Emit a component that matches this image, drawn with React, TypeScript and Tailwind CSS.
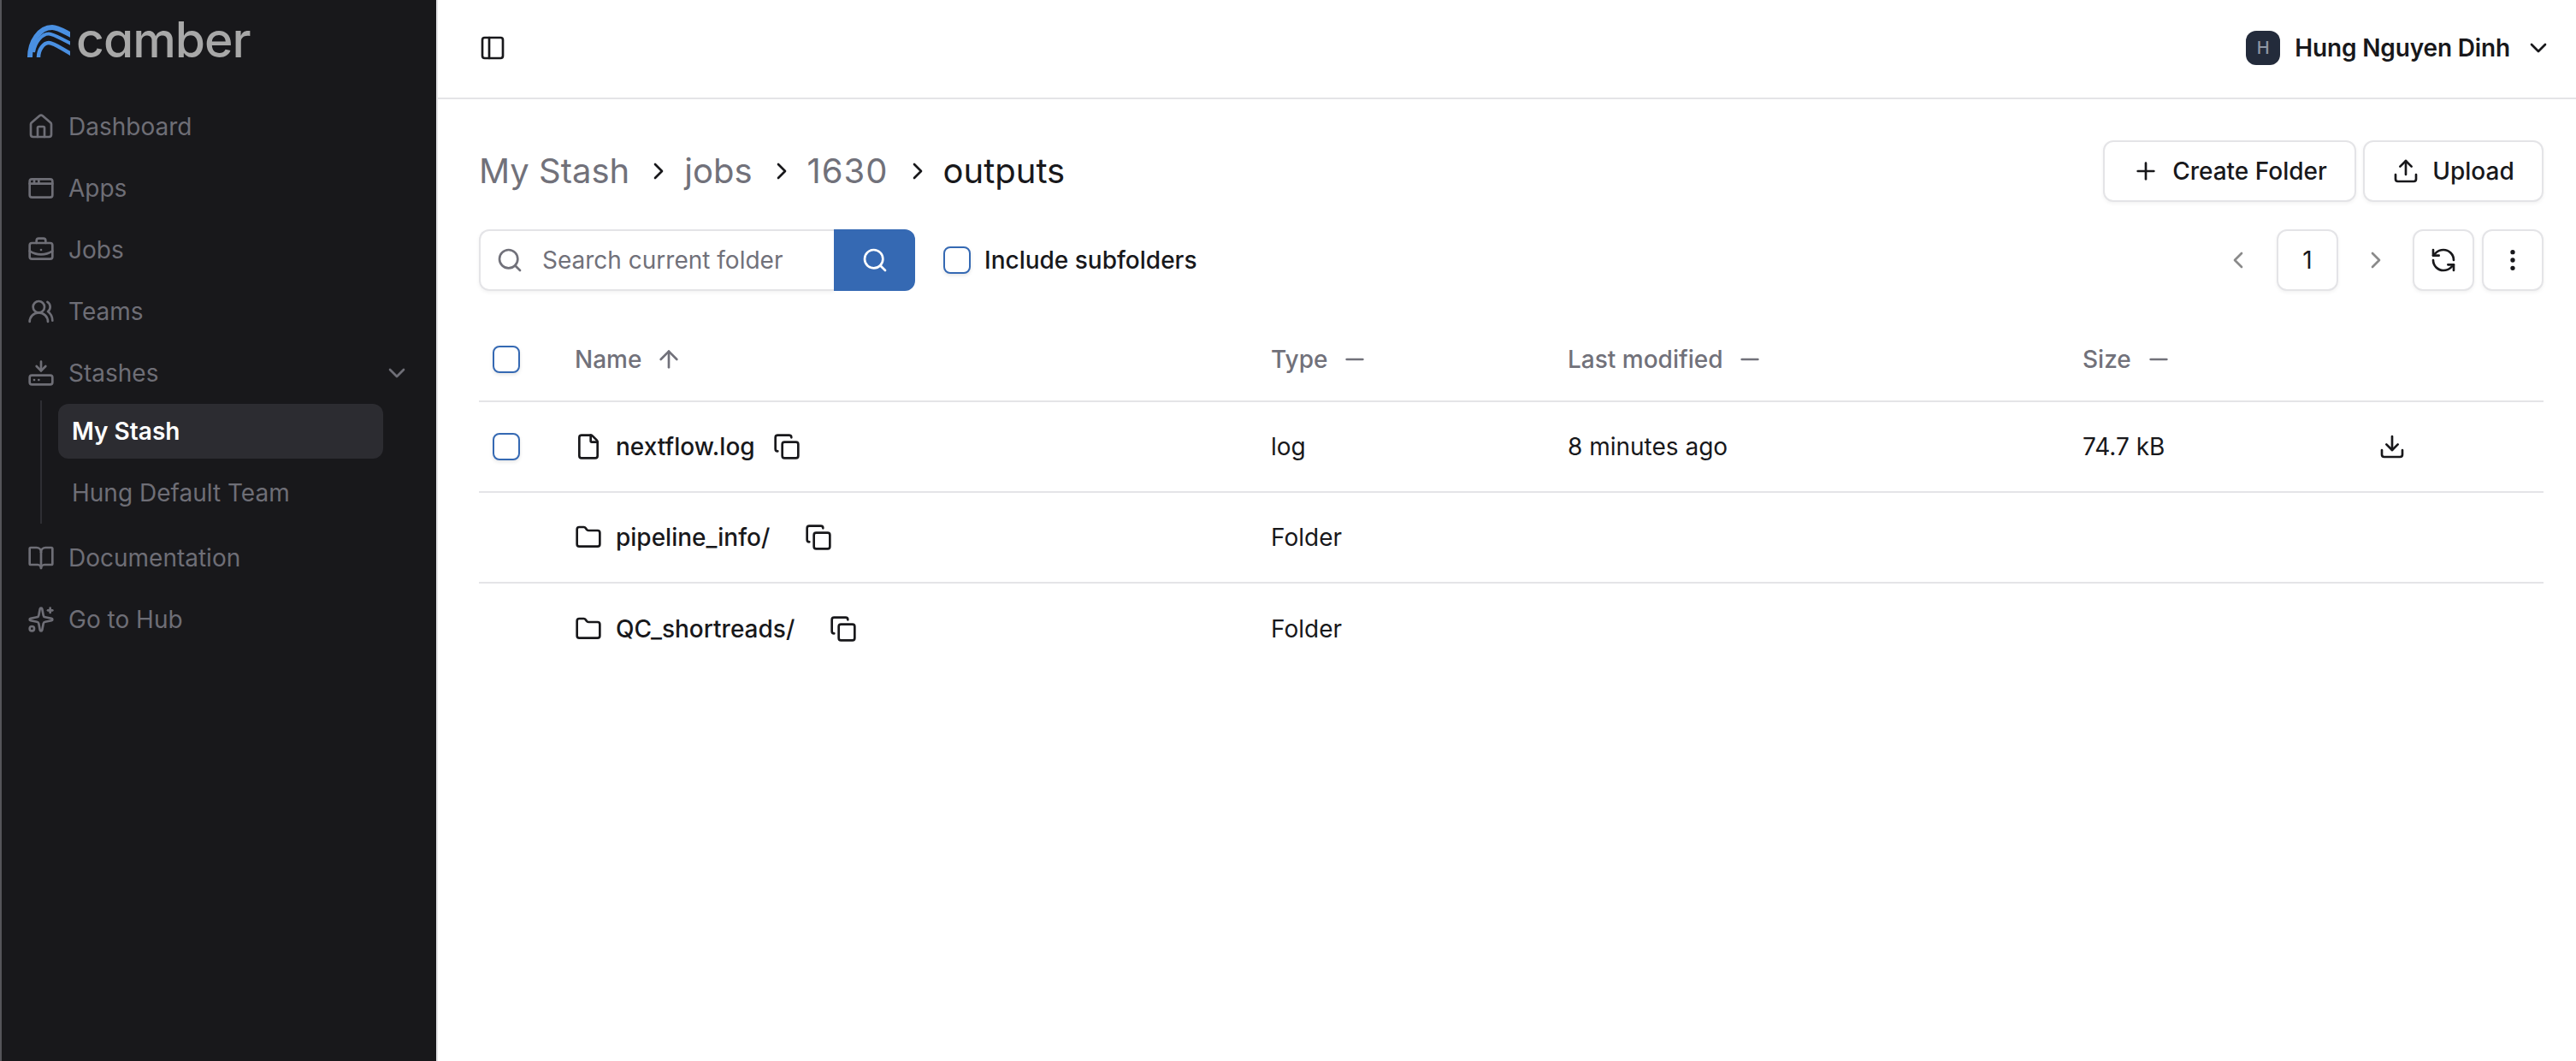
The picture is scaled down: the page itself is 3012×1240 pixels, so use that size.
import React from 'react';
import {
  AppWindow,
  ArrowUp,
  BookOpen,
  BriefcaseBusiness,
  ChevronDown,
  ChevronLeft,
  ChevronRight,
  Copy,
  Download,
  EllipsisVertical,
  File,
  Folder,
  HardDriveDownload,
  House,
  Minus,
  PanelLeft,
  Plus,
  RefreshCcw,
  Search,
  Sparkles,
  Upload,
  UsersRound,
} from 'lucide-react';

const topNav = [
  { label: 'Dashboard', icon: House },
  { label: 'Apps', icon: AppWindow },
  { label: 'Jobs', icon: BriefcaseBusiness },
  { label: 'Teams', icon: UsersRound },
];

const bottomNav = [
  { label: 'Documentation', icon: BookOpen },
  { label: 'Go to Hub', icon: Sparkles },
];

const rows = [
  { name: 'nextflow.log', isFile: true, copyGap: 'ml-[21px]', type: 'log', modified: '8 minutes ago', size: '74.7 kB' },
  { name: 'pipeline_info/', isFile: false, copyGap: 'ml-[41px]', type: 'Folder', modified: '', size: '' },
  { name: 'QC_shortreads/', isFile: false, copyGap: 'ml-[41px]', type: 'Folder', modified: '', size: '' },
];

const gridCols = 'grid grid-cols-[112px_814px_347px_602px_1fr] items-center';

const Logo = () => (
  <div className="flex h-[116px] items-start pl-[30px] pt-[29px]">
    <svg width="50" height="38" viewBox="0 0 50 38" fill="none" stroke="#4a90e2" className="shrink-0">
      <path d="M3 38C3 20 14 3 29 3C36 3 43 8 53 13" strokeWidth="6" />
      <path d="M7 32C9 20 17 10.5 25 10.5C31 10.5 40 17 53 23" strokeWidth="4" />
      <path d="M13 38C13 29 19 21 25 21C31 21 40 28 53 35" strokeWidth="4.5" />
    </svg>
    <span className="ml-[7px] -mt-[14px] text-[57px] leading-[64px] font-medium tracking-[-1px] text-[#a8a8a8] [font-feature-settings:'cv11']">
      camber
    </span>
  </div>
);

const NavItem = ({ label, icon: Icon }: { label: string; icon: React.ElementType }) => (
  <div className="flex h-16 items-center pl-[30px] text-[#6e6e76]">
    <Icon size={32} className="shrink-0" />
    <span className="ml-4 text-[28px]">{label}</span>
  </div>
);

const Sidebar = () => (
  <aside className="w-[512px] shrink-0 border-l-2 border-r-2 border-l-[#55555a] border-r-[#e4e4e7] bg-[#18181b]">
    <Logo />
    <nav className="flex flex-col gap-2">
      {topNav.map((item) => (
        <NavItem key={item.label} {...item} />
      ))}
      <div>
        <div className="flex h-16 items-center pl-[30px] pr-[30px] text-[#6e6e76]">
          <HardDriveDownload size={32} className="shrink-0" />
          <span className="ml-4 flex-1 text-[28px]">Stashes</span>
          <ChevronDown size={32} />
        </div>
        <div className="ml-[45px] flex w-[401px] flex-col gap-2 border-l-2 border-[#2e2e33] py-1 pl-[19px]">
          <div className="flex h-16 items-center rounded-[12px] bg-[#2c2c31] px-4 text-[28px] font-semibold text-white">
            My Stash
          </div>
          <div className="flex h-16 items-center px-4 text-[28px] text-[#6e6e76]">Hung Default Team</div>
        </div>
      </div>
      {bottomNav.map((item) => (
        <NavItem key={item.label} {...item} />
      ))}
    </nav>
  </aside>
);

const Header = () => (
  <header className="flex h-[116px] items-center justify-between border-b-2 border-[#e4e4e7] pb-[2px] pl-12 pr-7">
    <PanelLeft size={32} className="text-[#18181b]" />
    <div className="flex items-center">
      <div className="flex h-10 w-10 items-center justify-center rounded-[12px] bg-[#232b3b] text-[20px] font-medium text-[#8f96a3]">
        H
      </div>
      <span className="ml-[17px] text-[28px] font-semibold tracking-[-0.15px] text-[#18181b]">Hung Nguyen Dinh</span>
      <ChevronDown size={32} className="ml-[17px] text-[#18181b]" />
    </div>
  </header>
);

const OutlineButton = ({ children, className = '' }: { children: React.ReactNode; className?: string }) => (
  <button
    className={`flex h-[72px] items-center justify-center rounded-[12px] border-2 border-[#e4e4e7] bg-white text-[28px] font-medium text-[#18181b] shadow-[0_2px_4px_rgba(0,0,0,0.05)] ${className}`}
  >
    {children}
  </button>
);

const Checkbox = () => (
  <span className="block h-8 w-8 rounded-[8px] border-2 border-[#3569b3] bg-white shadow-[0_2px_4px_rgba(0,0,0,0.1)]" />
);

const Breadcrumbs = () => (
  <div className="flex h-[72px] items-center justify-between">
    <div className="flex items-center text-[40px] text-[#71717a]">
      <span>My Stash</span>
      <ChevronRight size={32} className="ml-[18px] mr-[14px] text-[#18181b]" />
      <span>jobs</span>
      <ChevronRight size={32} className="ml-[18px] mr-[14px] text-[#18181b]" />
      <span className="tracking-[1px]">1630</span>
      <ChevronRight size={32} className="ml-[18px] mr-[14px] text-[#18181b]" />
      <span className="text-[#18181b]">outputs</span>
    </div>
    <div className="flex items-center gap-2">
      <OutlineButton className="w-[296px] gap-[15px]">
        <Plus size={32} />
        Create Folder
      </OutlineButton>
      <OutlineButton className="w-[211px] gap-[15px]">
        <Upload size={32} />
        Upload
      </OutlineButton>
    </div>
  </div>
);

const Toolbar = () => (
  <div className="mt-8 flex h-[72px] items-center justify-between">
    <div className="flex items-center">
      <div className="flex h-[72px] w-[415px] items-center rounded-l-[12px] border-2 border-r-0 border-[#e4e4e7] pl-[18px] shadow-[0_2px_4px_rgba(0,0,0,0.05)]">
        <Search size={32} className="text-[#71717a]" />
        <span className="ml-[22px] text-[28px] text-[#71717a]">Search current folder</span>
      </div>
      <button className="flex h-[72px] w-[95px] items-center justify-center rounded-r-[12px] bg-[#3569b3] text-white">
        <Search size={32} />
      </button>
      <div className="ml-[33px] flex items-center">
        <Checkbox />
        <span className="ml-4 text-[28px] font-medium text-[#18181b]">Include subfolders</span>
      </div>
    </div>
    <div className="flex items-center">
      <ChevronLeft size={32} className="text-[#8a8a8a]" />
      <OutlineButton className="ml-[29px] w-[72px] font-normal">1</OutlineButton>
      <ChevronRight size={32} className="ml-7 text-[#8a8a8a]" />
      <OutlineButton className="ml-[27px] w-[72px]">
        <RefreshCcw size={32} />
      </OutlineButton>
      <OutlineButton className="ml-[9px] w-[72px]">
        <EllipsisVertical size={32} />
      </OutlineButton>
    </div>
  </div>
);

const HeaderCell = ({ label, sorted }: { label: string; sorted?: boolean }) => (
  <div className="flex items-center gap-4">
    <span>{label}</span>
    {sorted ? <ArrowUp size={32} /> : <Minus size={32} />}
  </div>
);

const FileTable = () => (
  <div className="mt-8 text-[28px]">
    <div className={`${gridCols} h-[98px] border-b-2 border-[#e4e4e7] font-medium text-[#71717a]`}>
      <div className="pl-4">
        <Checkbox />
      </div>
      <HeaderCell label="Name" sorted />
      <HeaderCell label="Type" />
      <HeaderCell label="Last modified" />
      <HeaderCell label="Size" />
    </div>
    {rows.map((row, index) => (
      <div
        key={row.name}
        className={`${gridCols} h-[106px] text-[#18181b] ${index < rows.length - 1 ? 'border-b-2 border-[#e4e4e7]' : ''}`}
      >
        <div className="pl-4">{row.isFile && <Checkbox />}</div>
        <div className="flex items-center font-medium">
          {row.isFile ? <File size={32} /> : <Folder size={32} />}
          <span className="ml-4">{row.name}</span>
          <Copy size={32} className={row.copyGap} />
        </div>
        <div>{row.type}</div>
        <div>{row.modified}</div>
        <div className="flex items-center">
          <span>{row.size}</span>
          {row.isFile && <Download size={32} className="ml-[250px]" />}
        </div>
      </div>
    ))}
  </div>
);

export default function App() {
  return (
    <div className="flex h-screen bg-white font-[Inter,sans-serif]">
      <Sidebar />
      <main className="min-w-0 flex-1">
        <Header />
        <div className="pl-12 pr-[38px] pt-12">
          <Breadcrumbs />
          <Toolbar />
          <FileTable />
        </div>
      </main>
    </div>
  );
}
